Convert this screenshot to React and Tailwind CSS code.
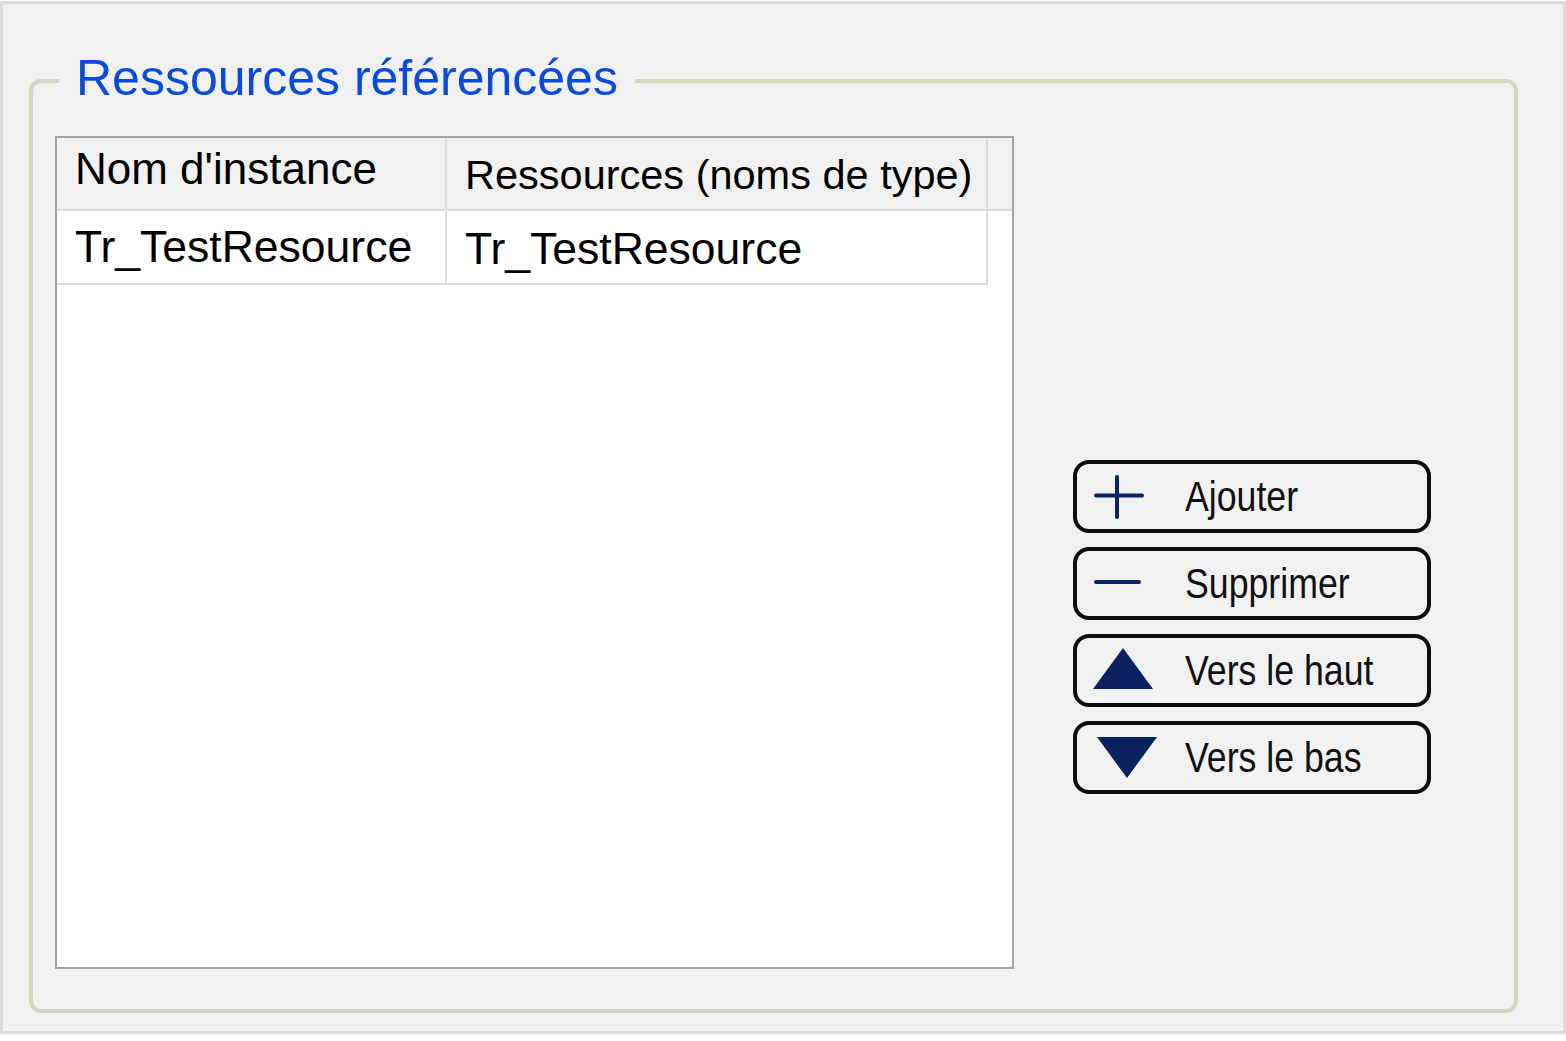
// App.jsx
const FONT = { fontFamily: '"Liberation Sans", Arial, sans-serif' };

export default function App() {
  return (
    <div className="bg-white min-h-screen" style={FONT}>
      <div className="mt-px w-[1566px] h-[1033px] border-[3px] border-[#dcdcdc] bg-[#f1f1f1] pl-[26px] pt-[50px]">
        <fieldset className="w-[1489px] h-[959px] border-4 border-[#d4d4c0] rounded-[12px] m-0 p-0">
          <legend className="ml-[26px] px-[17px] pb-[4px] text-[50px] leading-[49px] text-[#0a4bdb]">
            Ressources référencées
          </legend>

          <div className="flex pl-[22px] pt-[29px]">
            <RefTable />

            <div className="ml-[59px] mt-[324px] flex flex-col gap-[14px]">
              <ActionButton label="Ajouter" icon={<PlusIcon />} />
              <ActionButton label="Supprimer" icon={<MinusIcon />} />
              <ActionButton label="Vers le haut" icon={<UpIcon />} />
              <ActionButton label="Vers le bas" icon={<DownIcon />} />
            </div>
          </div>
        </fieldset>
      </div>
    </div>
  );
}

function RefTable() {
  return (
    <div className="w-[959px] h-[833px] border-2 border-[#a3a3a3] bg-white flex flex-col text-black">
      {/* header */}
      <div className="flex h-[73px] bg-[#f1f1f1] border-b-2 border-[#dcdcdc]">
        <div className="w-[390px] border-r-2 border-[#dcdcdc] flex items-center pl-[18px] pb-[10px] text-[44px] leading-none">
          Nom d'instance
        </div>
        <div className="w-[541px] border-r-2 border-[#dcdcdc] flex items-center pl-[18px] pt-[2px] text-[41.5px] leading-none">
          Ressources (noms de type)
        </div>
        <div className="flex-1" />
      </div>

      {/* row */}
      <div className="flex h-[74px]">
        <div className="w-[390px] border-r-2 border-b-2 border-[#dcdcdc] flex items-center pl-[18px] text-[44.5px] leading-none">
          Tr_TestResource
        </div>
        <div className="w-[541px] border-r-2 border-b-2 border-[#dcdcdc] flex items-center pl-[18px] pt-[4px] text-[44.5px] leading-none">
          Tr_TestResource
        </div>
        <div className="flex-1" />
      </div>
    </div>
  );
}

function ActionButton({ label, icon }) {
  return (
    <div className="w-[358px] h-[73px] border-4 border-[#0d0d0d] rounded-[16px] bg-[#f1f1f1] flex items-center pl-[15px]">
      <div className="w-[93px] flex items-center">{icon}</div>
      <span className="inline-block origin-left scale-x-[0.83] text-[43px] leading-none text-[#111] whitespace-nowrap">
        {label}
      </span>
    </div>
  );
}

function PlusIcon() {
  return (
    <svg width="52" height="44" viewBox="0 0 52 44">
      <path d="M4 20.5 H50 M25 2 V42" stroke="#0c2362" strokeWidth="4" strokeLinecap="round" fill="none" />
    </svg>
  );
}

function MinusIcon() {
  return (
    <svg width="50" height="8" viewBox="0 0 50 8" className="mt-[-4px]">
      <path d="M4 4 H47" stroke="#0c2362" strokeWidth="4" strokeLinecap="round" fill="none" />
    </svg>
  );
}

function UpIcon() {
  return (
    <svg width="62" height="42" viewBox="0 0 62 42" className="mt-[-3px]">
      <path d="M31 0 L61 41 L1 41 Z" fill="#0b2160" />
    </svg>
  );
}

function DownIcon() {
  return (
    <svg width="66" height="42" viewBox="0 0 66 42">
      <path d="M5 0 L65 0 L35 41 Z" fill="#0b2160" />
    </svg>
  );
}
